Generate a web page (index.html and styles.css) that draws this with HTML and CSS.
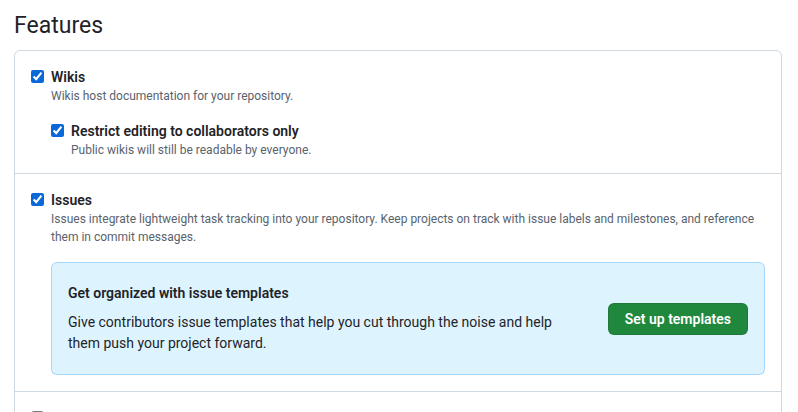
FILE: index.html
```html
<!DOCTYPE html>
<html lang="en">
<head>
<meta charset="utf-8">
<title>Features</title>
<link rel="stylesheet" href="styles.css">
</head>
<body>
<main class="page">
  <h2 class="subhead">Features</h2>
  <div class="box">
    <div class="box-row">
      <div class="check">
        <input type="checkbox" checked id="wikis">
        <div class="check-body">
          <label for="wikis" class="check-label">Wikis</label>
          <p class="note">Wikis host documentation for your repository.</p>
          <div class="check nested">
            <input type="checkbox" checked id="restrict">
            <div class="check-body">
              <label for="restrict" class="check-label">Restrict editing to collaborators only</label>
              <p class="note">Public wikis will still be readable by everyone.</p>
            </div>
          </div>
        </div>
      </div>
    </div>
    <div class="box-row">
      <div class="check">
        <input type="checkbox" checked id="issues">
        <div class="check-body">
          <label for="issues" class="check-label">Issues</label>
          <p class="note">Issues integrate lightweight task tracking into your repository. Keep projects on track with issue labels and milestones, and reference them in commit messages.</p>
          <div class="flash">
            <div class="flash-text">
              <h3 class="flash-title">Get organized with issue templates</h3>
              <p class="flash-body">Give contributors issue templates that help you cut through the noise and help them push your project forward.</p>
            </div>
            <button class="btn-primary" type="button">Set up templates</button>
          </div>
        </div>
      </div>
    </div>
    <div class="box-row">
      <div class="check">
        <input type="checkbox" id="sponsorships" aria-label="Sponsorships">
      </div>
    </div>
  </div>
</main>
</body>
</html>
```
FILE: styles.css
```css
* { box-sizing: border-box; }
html, body { margin: 0; padding: 0; background: #ffffff; }
body {
  font-family: Roboto, "Liberation Sans", sans-serif;
  color: #1f2328;
  font-size: 14px;
  line-height: 20px;
}
.page {
  padding: 8px 16px 0 14px;
}
.subhead {
  margin: 0 0 6px;
  font-size: 23px;
  line-height: 36px;
  font-weight: 400;
  color: #1f2328;
}
.box {
  border: 1px solid #d1d9e0;
  border-radius: 6px;
  overflow: hidden;
}
.box-row {
  padding: 16px 16px 14px;
}
.box-row + .box-row {
  border-top: 1px solid #d1d9e0;
}
.box-row:nth-child(2) {
  padding-bottom: 16px;
}
.check {
  display: grid;
  grid-template-columns: 20px 1fr;
  align-items: start;
  min-height: 20px;
}
.check input[type="checkbox"] {
  width: 13px;
  height: 13px;
  margin: 3px 0 0 0;
  accent-color: #0969da;
}
.check-label {
  display: block;
  font-weight: 600;
  font-size: 14px;
  line-height: 20px;
}
.note {
  margin: 0;
  font-size: 12px;
  line-height: 18px;
  color: #59636e;
}
.nested {
  margin-top: 16px;
}
.flash {
  margin-top: 16px;
  display: flex;
  align-items: center;
  padding: 20px 16px;
  background: #ddf4ff;
  border: 1px solid rgba(84, 174, 255, 0.4);
  border-radius: 6px;
}
.flash-text {
  flex: 1 1 auto;
  min-width: 0;
}
.flash-title {
  margin: 0 0 8px;
  font-size: 14px;
  line-height: 21px;
  font-weight: 600;
}
.flash-body {
  margin: 0;
  font-size: 14px;
  line-height: 21px;
}
.btn-primary {
  flex: 0 0 auto;
  margin-left: 32px;
  height: 32px;
  padding: 0 16px;
  font-family: inherit;
  font-size: 14px;
  font-weight: 600;
  line-height: 20px;
  color: #ffffff;
  background: #1f883d;
  border: 1px solid rgba(31, 35, 40, 0.15);
  border-radius: 6px;
  cursor: pointer;
}
```
